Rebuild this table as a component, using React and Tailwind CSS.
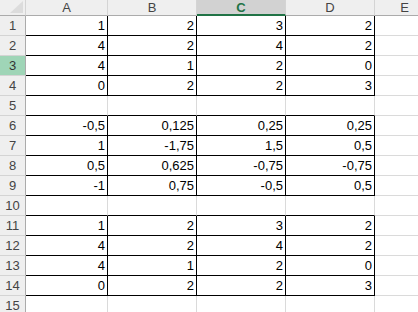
import React from "react";

const cols = ["A", "B", "C", "D", "E"];

// row number -> values for A..D (null = empty row)
const data = {
  1: ["1", "2", "3", "2"],
  2: ["4", "2", "4", "2"],
  3: ["4", "1", "2", "0"],
  4: ["0", "2", "2", "3"],
  6: ["-0,5", "0,125", "0,25", "0,25"],
  7: ["1", "-1,75", "1,5", "0,5"],
  8: ["0,5", "0,625", "-0,75", "-0,75"],
  9: ["-1", "0,75", "-0,5", "0,5"],
  11: ["1", "2", "3", "2"],
  12: ["4", "2", "4", "2"],
  13: ["4", "1", "2", "0"],
  14: ["0", "2", "2", "3"],
};

const rows = Array.from({ length: 15 }, (_, i) => i + 1);

const Corner = () => (
  <div className="h-[16px] bg-[#efefef] border-r border-b border-r-[#d4d4d4] border-b-[#ababab] relative">
    <svg className="absolute left-[10px] top-[1px]" width="13" height="12" viewBox="0 0 13 12">
      <polygon points="13,0 13,12 0,12" fill="#dcdcdc" />
    </svg>
  </div>
);

const ColHeader = ({ label }) => {
  const selected = label === "C";
  return (
    <div
      className={
        selected
          ? "h-[16px] bg-[#d2d2d2] border-r border-r-[#d4d4d4] border-b-2 border-b-[#217346] flex items-center justify-center text-[13px] font-bold text-[#217346] leading-none"
          : "h-[16px] bg-[#efefef] border-r border-r-[#d4d4d4] border-b border-b-[#ababab] flex items-center justify-center text-[13px] text-[#444444] leading-none"
      }
    >
      {label}
    </div>
  );
};

const RowHeader = ({ n }) => (
  <div
    className={
      n === 3
        ? "h-[20px] bg-[#9fd5b7] border-r border-b border-r-[#ababab] border-b-[#d4d4d4] flex items-center justify-center text-[13px] text-[#333333]"
        : "h-[20px] bg-[#efefef] border-r border-b border-r-[#ababab] border-b-[#d4d4d4] flex items-center justify-center text-[13px] text-[#444444]"
    }
  >
    {n}
  </div>
);

const Cell = ({ row, col }) => {
  const inTable = col < 4;
  const boxed = inTable && !!data[row];
  const belowBoxed = inTable && !!data[row + 1];
  const right = boxed ? "border-r-black" : "border-r-[#dadada]";
  const bottom = boxed || belowBoxed ? "border-b-black" : "border-b-[#dadada]";
  return (
    <div
      className={`h-[20px] border-r border-b ${right} ${bottom} flex items-end justify-end pr-[2px] pb-[2px] text-[13px] leading-[15px] text-black`}
    >
      {boxed ? data[row][col] : ""}
    </div>
  );
};

export default function App() {
  return (
    <div
      className="w-[418px] h-[312px] overflow-hidden bg-white"
      style={{ fontFamily: '"Liberation Sans", Arial, sans-serif' }}
    >
      <div className="grid grid-cols-[26px_82px_89px_89px_89px_60px]">
        <Corner />
        {cols.map((c) => (
          <ColHeader key={c} label={c} />
        ))}
        {rows.map((r) => (
          <React.Fragment key={r}>
            <RowHeader n={r} />
            {cols.map((c, i) => (
              <Cell key={c} row={r} col={i} />
            ))}
          </React.Fragment>
        ))}
      </div>
    </div>
  );
}
